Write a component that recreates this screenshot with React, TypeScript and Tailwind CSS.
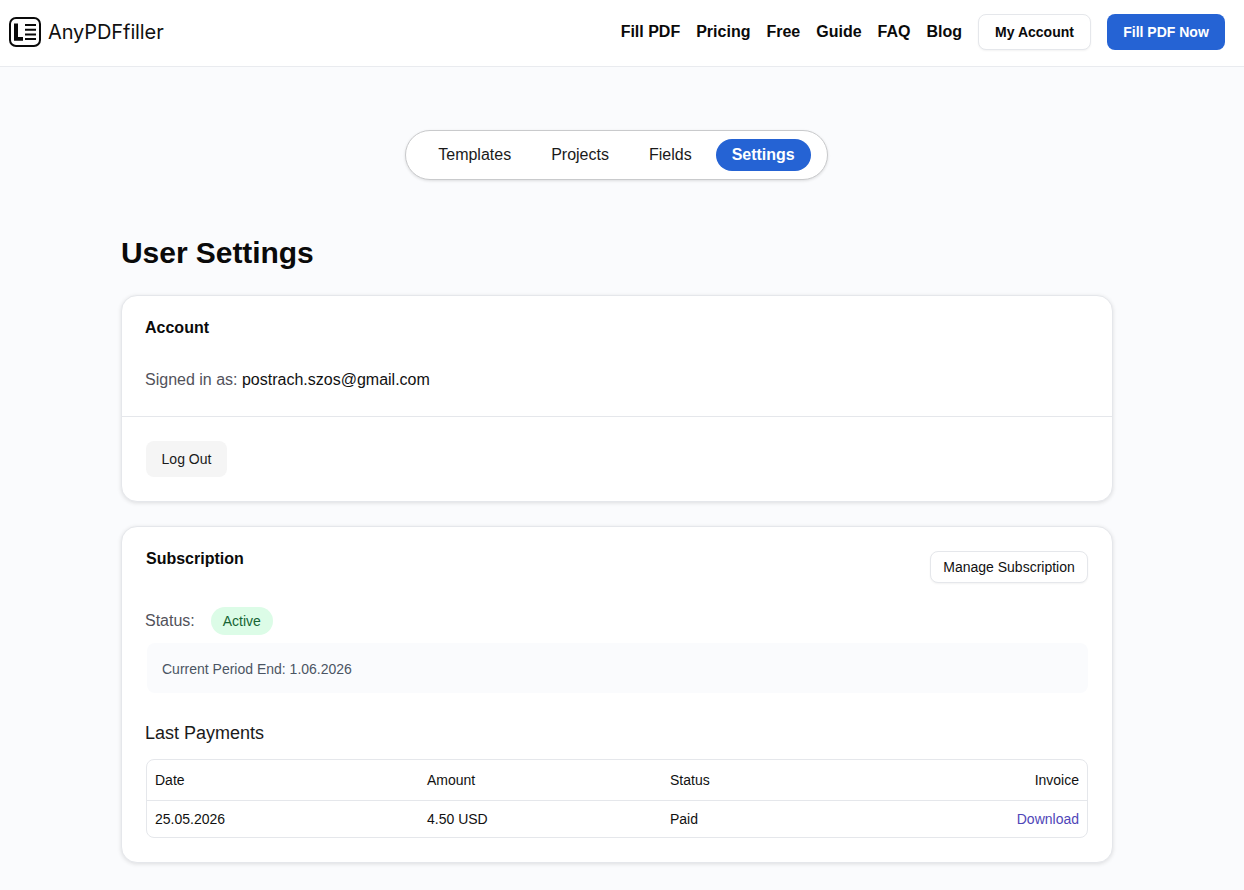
import React from 'react';

const navLinks = ['Fill PDF', 'Pricing', 'Free', 'Guide', 'FAQ', 'Blog'];
const tabs = ['Templates', 'Projects', 'Fields'];

const Logo = () => (
  <svg width="32" height="30" viewBox="0 0 32 30" fill="none">
    <rect x="1" y="1" width="30" height="28" rx="6" stroke="#0a0a0a" strokeWidth="2" />
    <path d="M5 6.5h4v13.5h5v3.7H5z" fill="#0a0a0a" />
    <path d="M16 8h11M16 12.7h11M16 17.4h11M16 22.1h11" stroke="#0a0a0a" strokeWidth="2" />
  </svg>
);

const cardClass = 'bg-white rounded-2xl border border-[#e5e7eb] shadow-[0_1px_4px_rgba(0,0,0,0.12)]';

export default function App() {
  return (
    <div className="min-h-[890px] bg-[#fafbfd] font-['Liberation_Sans',Arial,sans-serif] text-[#0a0a0a]">
      <header className="h-[67px] bg-white border-b border-[#e9ebef] flex items-center justify-between pb-[2px] pl-[9px] pr-[19px]">
        <div className="flex items-center gap-[7px]">
          <Logo />
          <span className="font-['Inter',sans-serif] text-[20px] tracking-[-0.1px] text-[#111]">AnyPDFfiller</span>
        </div>
        <nav className="flex items-center">
          <div className="flex items-center gap-4 mr-4">
            {navLinks.map((l) => (
              <a key={l} className="text-base font-bold text-[#0a0a0a]">{l}</a>
            ))}
          </div>
          <button className="h-[36px] w-[113px] rounded-lg bg-white border border-[#e5e7eb] shadow-[0_1px_2px_rgba(0,0,0,0.05)] text-sm font-bold">My Account</button>
          <button className="ml-4 h-[36px] w-[118px] rounded-lg bg-[#2563d4] text-white text-sm font-bold">Fill PDF Now</button>
        </nav>
      </header>

      <main className="w-[992px] ml-[121px]">
        <div className="flex justify-center pt-[63px] pr-px">
          <div className="flex items-center gap-2 p-2 px-4 h-[50px] rounded-full bg-white border border-[#c9cacc] shadow-[0_1px_3px_rgba(0,0,0,0.12)]">
            {tabs.map((t) => (
              <span key={t} className="px-4 text-base text-[#1a1a1a]">{t}</span>
            ))}
            <span className="h-8 flex items-center px-4 rounded-full bg-[#2563d4] text-white text-base font-bold">Settings</span>
          </div>
        </div>

        <h1 className="mt-[55px] text-[30px] leading-9 font-bold tracking-[-0.05px] text-[#0a0a0a]">User Settings</h1>

        <section className={`mt-[24px] h-[207px] ${cardClass}`}>
          <div className="h-[121px] px-[23px] pt-[22px] border-b border-[#e5e7eb]">
            <h2 className="text-base leading-5 font-bold">Account</h2>
            <p className="mt-[32px] text-base leading-5 text-[#52525b]">
              Signed in as: <span className="text-[#111]">postrach.szos@gmail.com</span>
            </p>
          </div>
          <div className="px-6 pt-6">
            <button className="h-[36px] w-[81px] rounded-lg bg-[#f5f5f5] text-sm text-[#1a1a1a]">Log Out</button>
          </div>
        </section>

        <section className={`mt-6 h-[337px] px-6 pt-6 ${cardClass}`}>
          <div className="flex justify-between items-start">
            <h2 className="text-base leading-5 font-bold -mt-[2px]">Subscription</h2>
            <button className="h-8 w-[158px] rounded-lg bg-white border border-[#e5e7eb] shadow-[0_1px_2px_rgba(0,0,0,0.05)] text-sm text-[#111]">Manage Subscription</button>
          </div>
          <div className="mt-6 -ml-px h-7 flex items-center">
            <span className="text-base text-[#52525b]">Status:</span>
            <span className="ml-4 h-7 w-[62px] flex items-center justify-center rounded-full bg-[#dcfce7] text-sm text-[#166534]">Active</span>
          </div>
          <div className="mt-2 ml-px h-[50px] px-[15px] pt-px flex items-center rounded-lg bg-[#fafbfd] text-sm text-[#4b5563]">
            Current Period End: 1.06.2026
          </div>
          <h3 className="mt-[26px] -ml-px text-lg leading-7 text-[#1a1a1a]">Last Payments</h3>
          <div className="mt-[12px] h-[79px] rounded-lg border border-[#e5e7eb] text-sm text-[#111]">
            <div className="h-[41px] flex items-center border-b border-[#e5e7eb] px-2">
              <span className="w-[272px]">Date</span>
              <span className="w-[243px]">Amount</span>
              <span className="w-[200px]">Status</span>
              <span className="flex-1 text-right">Invoice</span>
            </div>
            <div className="h-[36px] flex items-center px-2">
              <span className="w-[272px]">25.05.2026</span>
              <span className="w-[243px]">4.50 USD</span>
              <span className="w-[200px]">Paid</span>
              <a className="flex-1 text-right text-[#4f46b8]">Download</a>
            </div>
          </div>
        </section>
      </main>
    </div>
  );
}
